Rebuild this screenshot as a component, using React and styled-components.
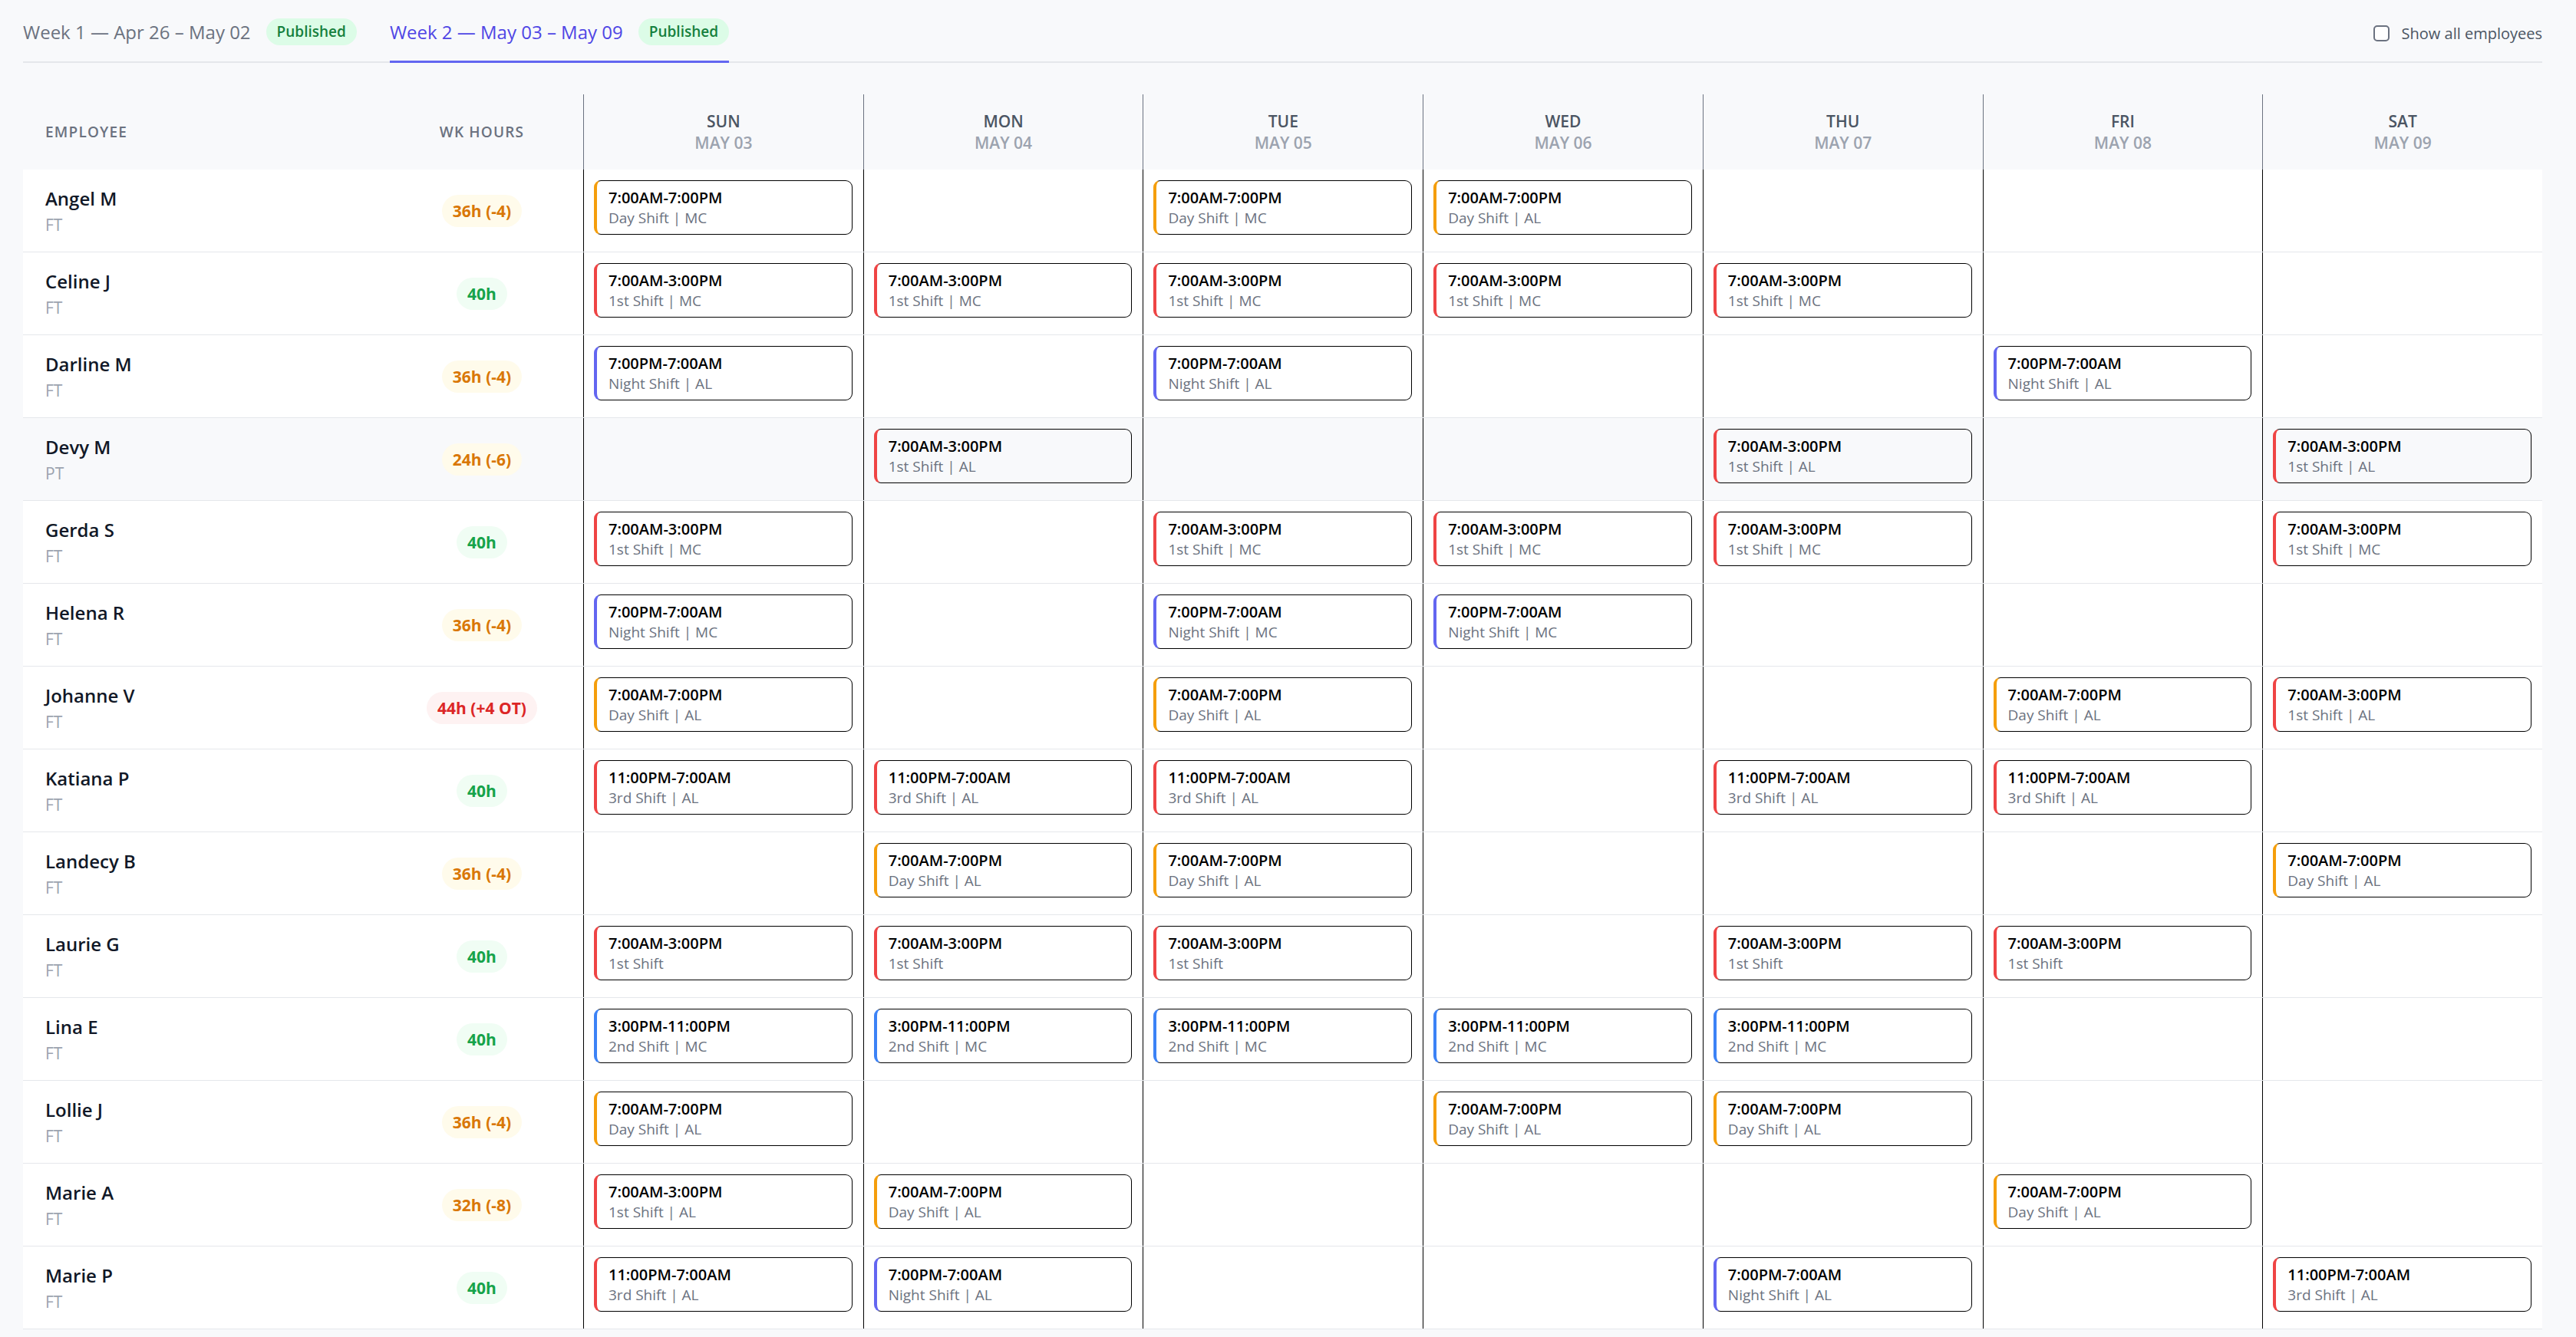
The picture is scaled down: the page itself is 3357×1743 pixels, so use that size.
import React from "react"
import styled, {createGlobalStyle} from "styled-components"

const GlobalStyle = createGlobalStyle`
  body {
    margin: 0;
    background: #f8f9fb;
    font-family: "Open Sans", "Noto Sans", sans-serif;
    color: #111827;
  }
`

const days = [
  {name: "SUN", date: "MAY 03"},
  {name: "MON", date: "MAY 04"},
  {name: "TUE", date: "MAY 05"},
  {name: "WED", date: "MAY 06"},
  {name: "THU", date: "MAY 07"},
  {name: "FRI", date: "MAY 08"},
  {name: "SAT", date: "MAY 09"},
]

const shifts = {
  day: {time: "7:00AM-7:00PM", label: "Day Shift", color: "#f59e0b"},
  first: {time: "7:00AM-3:00PM", label: "1st Shift", color: "#ef4444"},
  second: {time: "3:00PM-11:00PM", label: "2nd Shift", color: "#3b82f6"},
  third: {time: "11:00PM-7:00AM", label: "3rd Shift", color: "#ef4444"},
  night: {time: "7:00PM-7:00AM", label: "Night Shift", color: "#6366f1"},
}

// each entry: [shift key, unit] or null, Sun..Sat
const employees = [
  {name: "Angel M", type: "FT", hours: "36h (-4)", tone: "warn",
    week: [["day", "MC"], null, ["day", "MC"], ["day", "AL"], null, null, null]},
  {name: "Celine J", type: "FT", hours: "40h", tone: "ok",
    week: [["first", "MC"], ["first", "MC"], ["first", "MC"], ["first", "MC"], ["first", "MC"], null, null]},
  {name: "Darline M", type: "FT", hours: "36h (-4)", tone: "warn",
    week: [["night", "AL"], null, ["night", "AL"], null, null, ["night", "AL"], null]},
  {name: "Devy M", type: "PT", hours: "24h (-6)", tone: "warn",
    week: [null, ["first", "AL"], null, null, ["first", "AL"], null, ["first", "AL"]]},
  {name: "Gerda S", type: "FT", hours: "40h", tone: "ok",
    week: [["first", "MC"], null, ["first", "MC"], ["first", "MC"], ["first", "MC"], null, ["first", "MC"]]},
  {name: "Helena R", type: "FT", hours: "36h (-4)", tone: "warn",
    week: [["night", "MC"], null, ["night", "MC"], ["night", "MC"], null, null, null]},
  {name: "Johanne V", type: "FT", hours: "44h (+4 OT)", tone: "over",
    week: [["day", "AL"], null, ["day", "AL"], null, null, ["day", "AL"], ["first", "AL"]]},
  {name: "Katiana P", type: "FT", hours: "40h", tone: "ok",
    week: [["third", "AL"], ["third", "AL"], ["third", "AL"], null, ["third", "AL"], ["third", "AL"], null]},
  {name: "Landecy B", type: "FT", hours: "36h (-4)", tone: "warn",
    week: [null, ["day", "AL"], ["day", "AL"], null, null, null, ["day", "AL"]]},
  {name: "Laurie G", type: "FT", hours: "40h", tone: "ok",
    week: [["first"], ["first"], ["first"], null, ["first"], ["first"], null]},
  {name: "Lina E", type: "FT", hours: "40h", tone: "ok",
    week: [["second", "MC"], ["second", "MC"], ["second", "MC"], ["second", "MC"], ["second", "MC"], null, null]},
  {name: "Lollie J", type: "FT", hours: "36h (-4)", tone: "warn",
    week: [["day", "AL"], null, null, ["day", "AL"], ["day", "AL"], null, null]},
  {name: "Marie A", type: "FT", hours: "32h (-8)", tone: "warn",
    week: [["first", "AL"], ["day", "AL"], null, null, null, ["day", "AL"], null]},
  {name: "Marie P", type: "FT", hours: "40h", tone: "ok",
    week: [["third", "AL"], ["night", "AL"], null, null, ["night", "AL"], null, ["third", "AL"]]},
]

const tones = {
  warn: {fg: "#d97706", bg: "#fffbeb"},
  ok: {fg: "#16a34a", bg: "#f0fdf4"},
  over: {fg: "#dc2626", bg: "#fef2f2"},
}

const Page = styled.div`
  padding: 0 44px 0 30px;
`

const TabBar = styled.div`
  display: flex;
  justify-content: space-between;
  height: 82px;
  box-sizing: border-box;
  border-bottom: 2px solid #e5e7eb;
`

const Tabs = styled.div`
  display: flex;
  gap: 43px;
`

const Tab = styled.div`
  display: flex;
  align-items: center;
  gap: 20px;
  padding-top: 3px;
  margin-bottom: -2px;
  border-bottom: 3px solid ${p => (p.$active ? "#6366f1" : "transparent")};
  color: ${p => (p.$active ? "#4f46e5" : "#6b7280")};
  font-size: 24px;
  white-space: nowrap;
`

const Published = styled.span`
  display: inline-block;
  height: 35px;
  line-height: 35px;
  padding: 0 14px;
  border-radius: 18px;
  background: #dcfce7;
  color: #15803d;
  font-size: 19px;
  font-weight: 600;
`

const Options = styled.label`
  display: flex;
  align-items: center;
  gap: 16px;
  padding-top: 6px;
  color: #4b5563;
  font-size: 20px;
`

const Check = styled.input`
  appearance: none;
  margin: 0;
  width: 21px;
  height: 21px;
  box-sizing: border-box;
  border: 2px solid #6b7280;
  border-radius: 5px;
  background: #fff;
`

const Table = styled.div`
  margin-top: 41px;
`

const Row = styled.div`
  display: grid;
  grid-template-columns: 466px 264px repeat(7, minmax(0, 1fr));
  box-sizing: border-box;
  height: ${p => (p.$head ? "98px" : "108px")};
  background: ${p => (p.$head ? "transparent" : p.$muted ? "#f8f9fb" : "#fff")};
  border-bottom: ${p => (p.$head ? "none" : "1px solid #e5e7eb")};
`

const HeadLabel = styled.div`
  display: flex;
  align-items: center;
  justify-content: ${p => (p.$center ? "center" : "flex-start")};
  padding-left: ${p => (p.$center ? "0" : "29px")};
  color: #6b7280;
  font-size: 19px;
  font-weight: 600;
  letter-spacing: 1.2px;
  line-height: 26px;
`

const DayHead = styled.div`
  display: flex;
  flex-direction: column;
  align-items: center;
  justify-content: center;
  border-left: 1px solid #6b7280;
  font-size: 21px;
  font-weight: 600;
  line-height: 28px;
`

const DayName = styled.span`
  color: #4b5563;
`

const DayDate = styled.span`
  color: #9ca3af;
`

const EmployeeCell = styled.div`
  display: flex;
  flex-direction: column;
  justify-content: center;
  gap: 4px;
  padding-left: 29px;
`

const Name = styled.div`
  font-size: 24px;
  font-weight: 600;
  line-height: 32px;
  color: #111827;
`

const Kind = styled.div`
  font-size: 21px;
  line-height: 28px;
  color: #9ca3af;
`

const HoursCell = styled.div`
  display: flex;
  align-items: center;
  justify-content: center;
`

const Hours = styled.span`
  height: 42px;
  line-height: 42px;
  padding: 0 14px;
  border-radius: 21px;
  font-size: 21px;
  font-weight: 700;
  color: ${p => tones[p.$tone].fg};
  background: ${p => tones[p.$tone].bg};
`

const DayCell = styled.div`
  border-left: 1px solid #000;
  padding: 14px 14px 0 13px;
`

const Card = styled.div`
  border: 1px solid #000;
  border-left: 4px solid ${p => p.$color};
  border-radius: 9px;
  padding: 9px 12px 8px 15px;
  line-height: 26px;
`

const Time = styled.div`
  font-size: 20px;
  font-weight: 600;
  color: #000;
`

const Detail = styled.div`
  font-size: 19px;
  color: #6b7280;
`

const ShiftCard = ({entry}) => {
  const shift = shifts[entry[0]]
  const detail = entry[1] ? `${shift.label} | ${entry[1]}` : shift.label
  return (
    <Card $color={shift.color}>
      <Time>{shift.time}</Time>
      <Detail>{detail}</Detail>
    </Card>
  )
}

export default function App() {
  return (
    <Page>
      <GlobalStyle />
      <TabBar>
        <Tabs>
          <Tab>Week 1 — Apr 26 – May 02 <Published>Published</Published></Tab>
          <Tab $active>Week 2 — May 03 – May 09 <Published>Published</Published></Tab>
        </Tabs>
        <Options>
          <Check type="checkbox" />
          Show all employees
        </Options>
      </TabBar>

      <Table>
        <Row $head>
          <HeadLabel>EMPLOYEE</HeadLabel>
          <HeadLabel $center>WK HOURS</HeadLabel>
          {days.map(d => (
            <DayHead key={d.name}>
              <DayName>{d.name}</DayName>
              <DayDate>{d.date}</DayDate>
            </DayHead>
          ))}
        </Row>
        {employees.map(emp => (
          <Row key={emp.name} $muted={emp.type === "PT"}>
            <EmployeeCell>
              <Name>{emp.name}</Name>
              <Kind>{emp.type}</Kind>
            </EmployeeCell>
            <HoursCell>
              <Hours $tone={emp.tone}>{emp.hours}</Hours>
            </HoursCell>
            {emp.week.map((entry, i) => (
              <DayCell key={i}>{entry && <ShiftCard entry={entry} />}</DayCell>
            ))}
          </Row>
        ))}
      </Table>
    </Page>
  )
}
